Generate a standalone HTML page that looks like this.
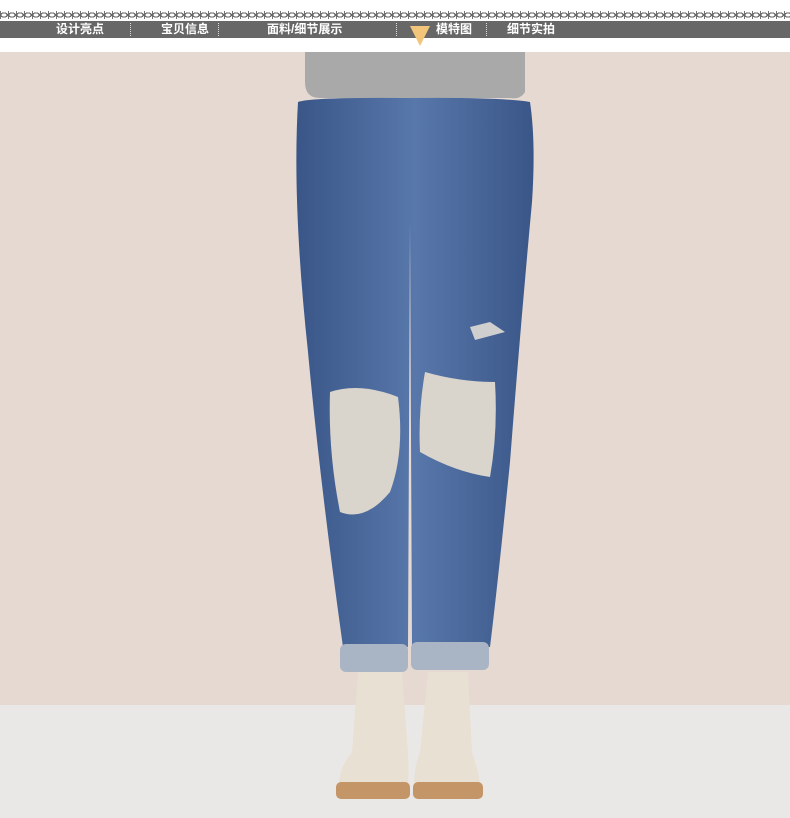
<!DOCTYPE html>
<html><head><meta charset="utf-8"><style>
body{margin:0;width:790px;height:818px;overflow:hidden;background:#fff;font-family:"Liberation Sans","Noto Sans CJK SC",sans-serif;position:relative}
.chain{position:absolute;left:0;top:11px;width:790px;height:8px;background:repeating-linear-gradient(90deg,#777 0 1px,transparent 1px 8px);}
.chain:before{content:"";position:absolute;left:0;right:0;top:0;height:8px;background:radial-gradient(ellipse 4px 2.6px at 4px 4px,#fff 0 60%,#666 65% 100%,transparent 100%);background-size:8px 8px}
.bar{position:absolute;left:0;top:21px;width:790px;height:17px;background:#676767;color:#fff;font-size:12px;line-height:17px;font-weight:bold}
.bar span{position:absolute;top:0}
.sep{position:absolute;top:2px;height:13px;border-left:1px dotted #ddd}
</style></head><body>
<div class="chain"></div>
<div class="bar">
<span style="left:56px">设计亮点</span><i class="sep" style="left:130px"></i>
<span style="left:161px">宝贝信息</span><i class="sep" style="left:218px"></i>
<span style="left:267px">面料/细节展示</span><i class="sep" style="left:396px"></i>
<span style="left:436px">模特图</span><i class="sep" style="left:486px"></i>
<span style="left:507px">细节实拍</span>
</div>
<svg style="position:absolute;left:410px;top:26px" width="22" height="22"><polygon points="0,0 20,0 10,20" fill="#f2c57a"/></svg>
<svg style="position:absolute;left:0;top:52px" width="790" height="766">
<defs><linearGradient id="j" x1="0" x2="1"><stop offset="0" stop-color="#3a5688"/><stop offset=".5" stop-color="#5877aa"/><stop offset="1" stop-color="#3a5688"/></linearGradient></defs>
<rect width="790" height="653" fill="#e5d9d2"/>
<rect y="653" width="790" height="113" fill="#eae8e7"/>
<path d="M305 0H525V40Q520 48 510 46H320Q305 46 305 30Z" fill="#a9a9a9"/>
<path d="M298 50Q310 45 410 46Q500 45 530 50Q536 90 532 150Q520 280 510 410Q498 530 490 595H412L410 170L408 595H343Q320 430 308 300Q292 150 298 50Z" fill="url(#j)"/>
<path d="M330 340Q360 330 398 345Q405 400 390 440Q365 470 340 460Q328 400 330 340Z" fill="#d9d4cc"/>
<path d="M425 320Q460 330 495 330Q498 380 490 425Q455 420 420 400Q418 360 425 320Z" fill="#d9d4cc"/>
<path d="M470 275l20 -5l15 10l-30 8Z" fill="#cfcfcf"/>
<rect x="340" y="592" width="68" height="28" rx="6" fill="#a9b5c4"/>
<rect x="411" y="590" width="78" height="28" rx="6" fill="#a9b5c4"/>
<path d="M358 620H402L408 700Q410 740 405 745H340Q335 720 352 700Z" fill="#e8e0d2"/>
<path d="M428 620H468L472 700Q485 740 478 745H415Q412 720 420 700Z" fill="#e8e0d2"/>
<rect x="336" y="730" width="74" height="17" rx="5" fill="#c49566"/>
<rect x="413" y="730" width="70" height="17" rx="5" fill="#c49566"/>
</svg>
</body></html>
